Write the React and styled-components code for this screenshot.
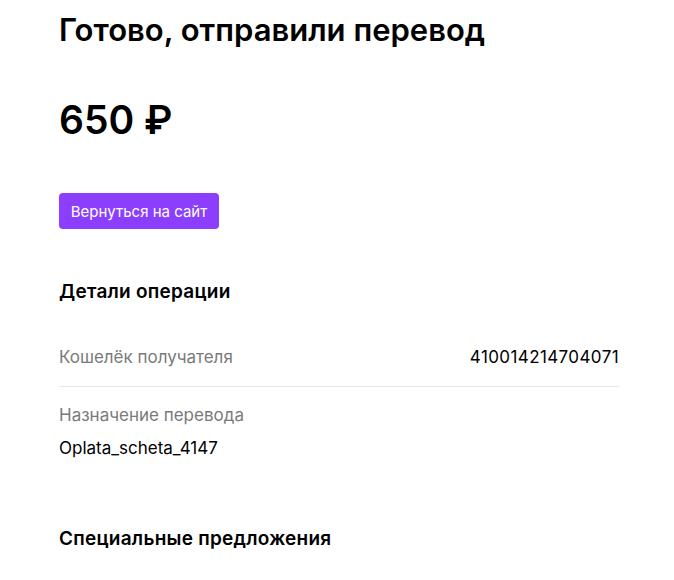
import React from 'react'
import styled, { createGlobalStyle } from 'styled-components'

const Global = createGlobalStyle`
  html, body { margin: 0; padding: 0; background: #fff; }
  body { font-family: Inter, "Noto Sans", sans-serif; color: #000; }
`

const Page = styled.main`
  width: 560px;
  padding: 10px 0 0 59px;
`

const Title = styled.h1`
  margin: 0;
  font-size: 31px;
  line-height: 40px;
  font-weight: 600;
`

const Amount = styled.div`
  margin-top: 45px;
  font-size: 39px;
  line-height: 50px;
  font-weight: 600;
`

const BackButton = styled.button`
  display: block;
  margin-top: 48px;
  width: 160px;
  height: 36px;
  border: 0;
  border-radius: 4px;
  background: #8b3ffd;
  color: #fff;
  font-family: inherit;
  font-size: 15px;
  cursor: pointer;
`

const SectionTitle = styled.h2`
  margin: ${p => p.$top}px 0 0;
  font-size: 19px;
  line-height: 24px;
  font-weight: 600;
  letter-spacing: 0.25px;
`

const Details = styled.div`
  margin-top: 41px;
  display: flex;
  flex-direction: column;
`

const Row = styled.div`
  display: flex;
  flex-direction: ${p => (p.$stacked ? 'column' : 'row')};
  justify-content: space-between;
  gap: ${p => (p.$stacked ? '9px' : '0')};
  padding: ${p => (p.$stacked ? '16px 0' : '0 0 17px')};
  border-bottom: ${p => (p.$divider ? '1px solid #e8e8e8' : '0')};
`

const Label = styled.span`
  font-size: 17px;
  line-height: 24px;
  color: #7a7a7a;
`

const Value = styled.span`
  font-size: 17px;
  line-height: 24px;
  color: #000;
  letter-spacing: ${p => (p.$wide ? '0.4px' : '0')};
`

export default function App() {
  return (
    <>
      <Global />
      <Page>
        <Title>Готово, отправили перевод</Title>
        <Amount>650 ₽</Amount>
        <BackButton>Вернуться на сайт</BackButton>
        <SectionTitle $top={51}>Детали операции</SectionTitle>
        <Details>
          <Row $divider>
            <Label>Кошелёк получателя</Label>
            <Value $wide>410014214704071</Value>
          </Row>
          <Row $stacked>
            <Label>Назначение перевода</Label>
            <Value>Oplata_scheta_4147</Value>
          </Row>
        </Details>
        <SectionTitle $top={51}>Специальные предложения</SectionTitle>
      </Page>
    </>
  )
}
